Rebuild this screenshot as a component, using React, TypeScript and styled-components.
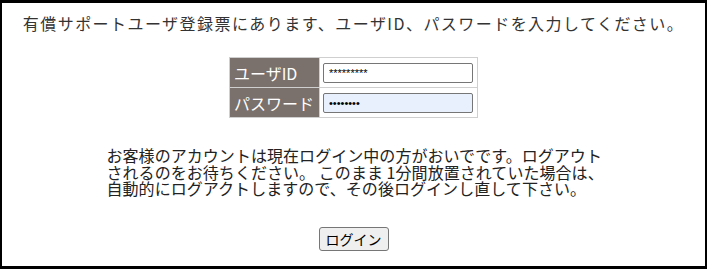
import React from "react";
import styled, { createGlobalStyle } from "styled-components";

const Global = createGlobalStyle`
  html, body { margin: 0; padding: 0; background: #fff; }
  body { font-family: "Noto Sans CJK JP", "Noto Sans", sans-serif; }
`;

const Frame = styled.div`
  box-sizing: border-box;
  width: 707px;
  height: 269px;
  border: 2px solid #000;
  border-top-width: 3px;
  border-bottom-width: 3px;
  display: flex;
  flex-direction: column;
  align-items: center;
  color: #222;
`;

const Title = styled.h1`
  margin: 10px 0 0;
  font-size: 16px;
  font-weight: normal;
  line-height: 20px;
  letter-spacing: 1.45px;
  color: #333;
  text-align: center;
`;

const LoginTable = styled.table`
  margin-top: 24px;
  border: 1px solid #cfcfcf;
  border-collapse: collapse;
`;

const Row = styled.tr`
  height: 30px;
`;

const Label = styled.th`
  box-sizing: border-box;
  width: 90px;
  padding: 0 4px;
  background: #7a706c;
  color: #fff;
  font-size: 16px;
  font-weight: normal;
  text-align: left;
  border: 1px solid #cfcfcf;
  white-space: nowrap;
`;

const Field = styled.td`
  box-sizing: border-box;
  width: 158px;
  padding: 0 3px;
  border: 1px solid #cfcfcf;
`;

const Input = styled.input<{ $filled?: boolean }>`
  box-sizing: border-box;
  display: block;
  width: 150px;
  height: 20px;
  padding: 0 5px;
  border: 1px solid #767676;
  border-radius: 2px;
  background: ${(p) => (p.$filled ? "#e8f0fe" : "#fff")};
  font-family: "Liberation Sans", Arial, sans-serif;
  font-size: 11px;
  color: #000;
  outline: none;
`;

const Notice = styled.p`
  margin: 29px 0 0 6px;
  width: 500px;
  white-space: nowrap;
  font-size: 16px;
  letter-spacing: 0.05px;
  line-height: 16.5px;
  color: #222;
  text-align: left;
`;

const Button = styled.button`
  margin-top: 30px;
  height: 24px;
  padding: 0 6px;
  background: #efefef;
  border: 1px solid #767676;
  border-radius: 3px;
  font-family: "Noto Sans CJK JP", sans-serif;
  font-size: 14px;
  color: #000;
`;

export default function App() {
  return (
    <>
      <Global />
      <Frame>
        <Title>有償サポートユーザ登録票にあります、ユーザID、パスワードを入力してください。</Title>
        <LoginTable>
          <tbody>
            <Row>
              <Label>ユーザID</Label>
              <Field>
                <Input type="text" defaultValue="*********" readOnly />
              </Field>
            </Row>
            <Row>
              <Label>パスワード</Label>
              <Field>
                <Input type="password" defaultValue="12345678" $filled readOnly />
              </Field>
            </Row>
          </tbody>
        </LoginTable>
        <Notice>
          お客様のアカウントは現在ログイン中の方がおいでです。ログアウト
          <br />
          されるのをお待ちください。 このまま 1分間放置されていた場合は、
          <br />
          自動的にログアクトしますので、その後ログインし直して下さい。
        </Notice>
        <Button type="button">ログイン</Button>
      </Frame>
    </>
  );
}
